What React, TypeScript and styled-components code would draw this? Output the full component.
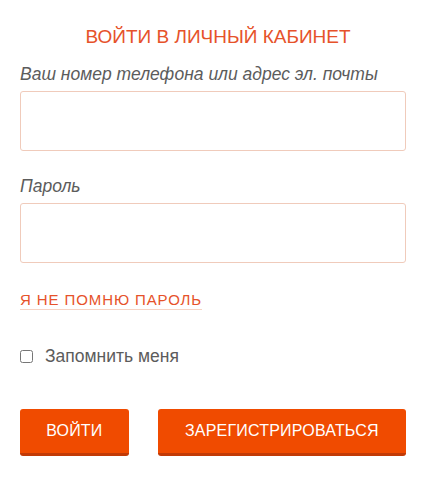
import React from 'react';
import styled, { createGlobalStyle } from 'styled-components';

const GlobalStyle = createGlobalStyle`
    body {
        margin: 0;
        background: #fff;
        font-family: Arial, "Liberation Sans", sans-serif;
    }
`;

const LoginForm = () => {
    return <Wrap>
        <GlobalStyle />
        <Title>ВОЙТИ В ЛИЧНЫЙ КАБИНЕТ</Title>
        <Field>
            <Label>Ваш номер телефона или адрес эл. почты</Label>
            <Input type="text" />
        </Field>
        <Field>
            <Label>Пароль</Label>
            <Input type="password" />
        </Field>
        <Forgot href="#">Я НЕ ПОМНЮ ПАРОЛЬ</Forgot>
        <Remember>
            <input type="checkbox" />
            <span>Запомнить меня</span>
        </Remember>
        <Buttons>
            <Button>ВОЙТИ</Button>
            <Button wide>ЗАРЕГИСТРИРОВАТЬСЯ</Button>
        </Buttons>
    </Wrap>
}

export default LoginForm;

const Wrap = styled.div`
    width: 386px;
    padding: 26px 18px 0 20px;
    display: flex;
    flex-direction: column;
`

const Title = styled.h2`
    margin: 0 0 16px;
    padding-left: 10px;
    text-align: center;
    font-weight: normal;
    font-size: 19px;
    line-height: 22px;
    color: #e6522a;
`

const Field = styled.div`
    display: flex;
    flex-direction: column;
    margin-bottom: 25px;
`

const Label = styled.label`
    font-style: italic;
    font-size: 17.5px;
    line-height: 20px;
    color: #5c5c5c;
    margin-bottom: 7px;
`

const Input = styled.input`
    box-sizing: border-box;
    width: 100%;
    height: 60px;
    border: 1px solid #f0cbbb;
    border-radius: 3px;
    outline: none;
    padding: 0 12px;
    font-size: 17px;
`

const Forgot = styled.a`
    align-self: flex-start;
    margin-top: 3px;
    font-size: 15px;
    line-height: 17px;
    letter-spacing: 0.9px;
    color: #e6522a;
    text-decoration: none;
    border-bottom: 1px solid #f6d3c4;
    padding-bottom: 1px;
`

const Remember = styled.label`
    display: flex;
    align-items: center;
    margin-top: 36px;
    font-size: 17.5px;
    color: #5c5c5c;
    input {
        width: 13px;
        height: 13px;
        margin: 0 12px 0 0;
    }
`

const Buttons = styled.div`
    display: flex;
    gap: 29px;
    margin-top: 42px;
`

const Button = styled.button<{ wide?: boolean }>`
    height: 47px;
    width: ${p => p.wide ? '249px' : '109px'};
    border: none;
    border-bottom: 3px solid #c23a06;
    border-radius: 3px;
    background: #f04b00;
    color: #fff;
    font-family: Arial, "Liberation Sans", sans-serif;
    font-size: 16px;
    letter-spacing: 0.2px;
    cursor: pointer;
`
